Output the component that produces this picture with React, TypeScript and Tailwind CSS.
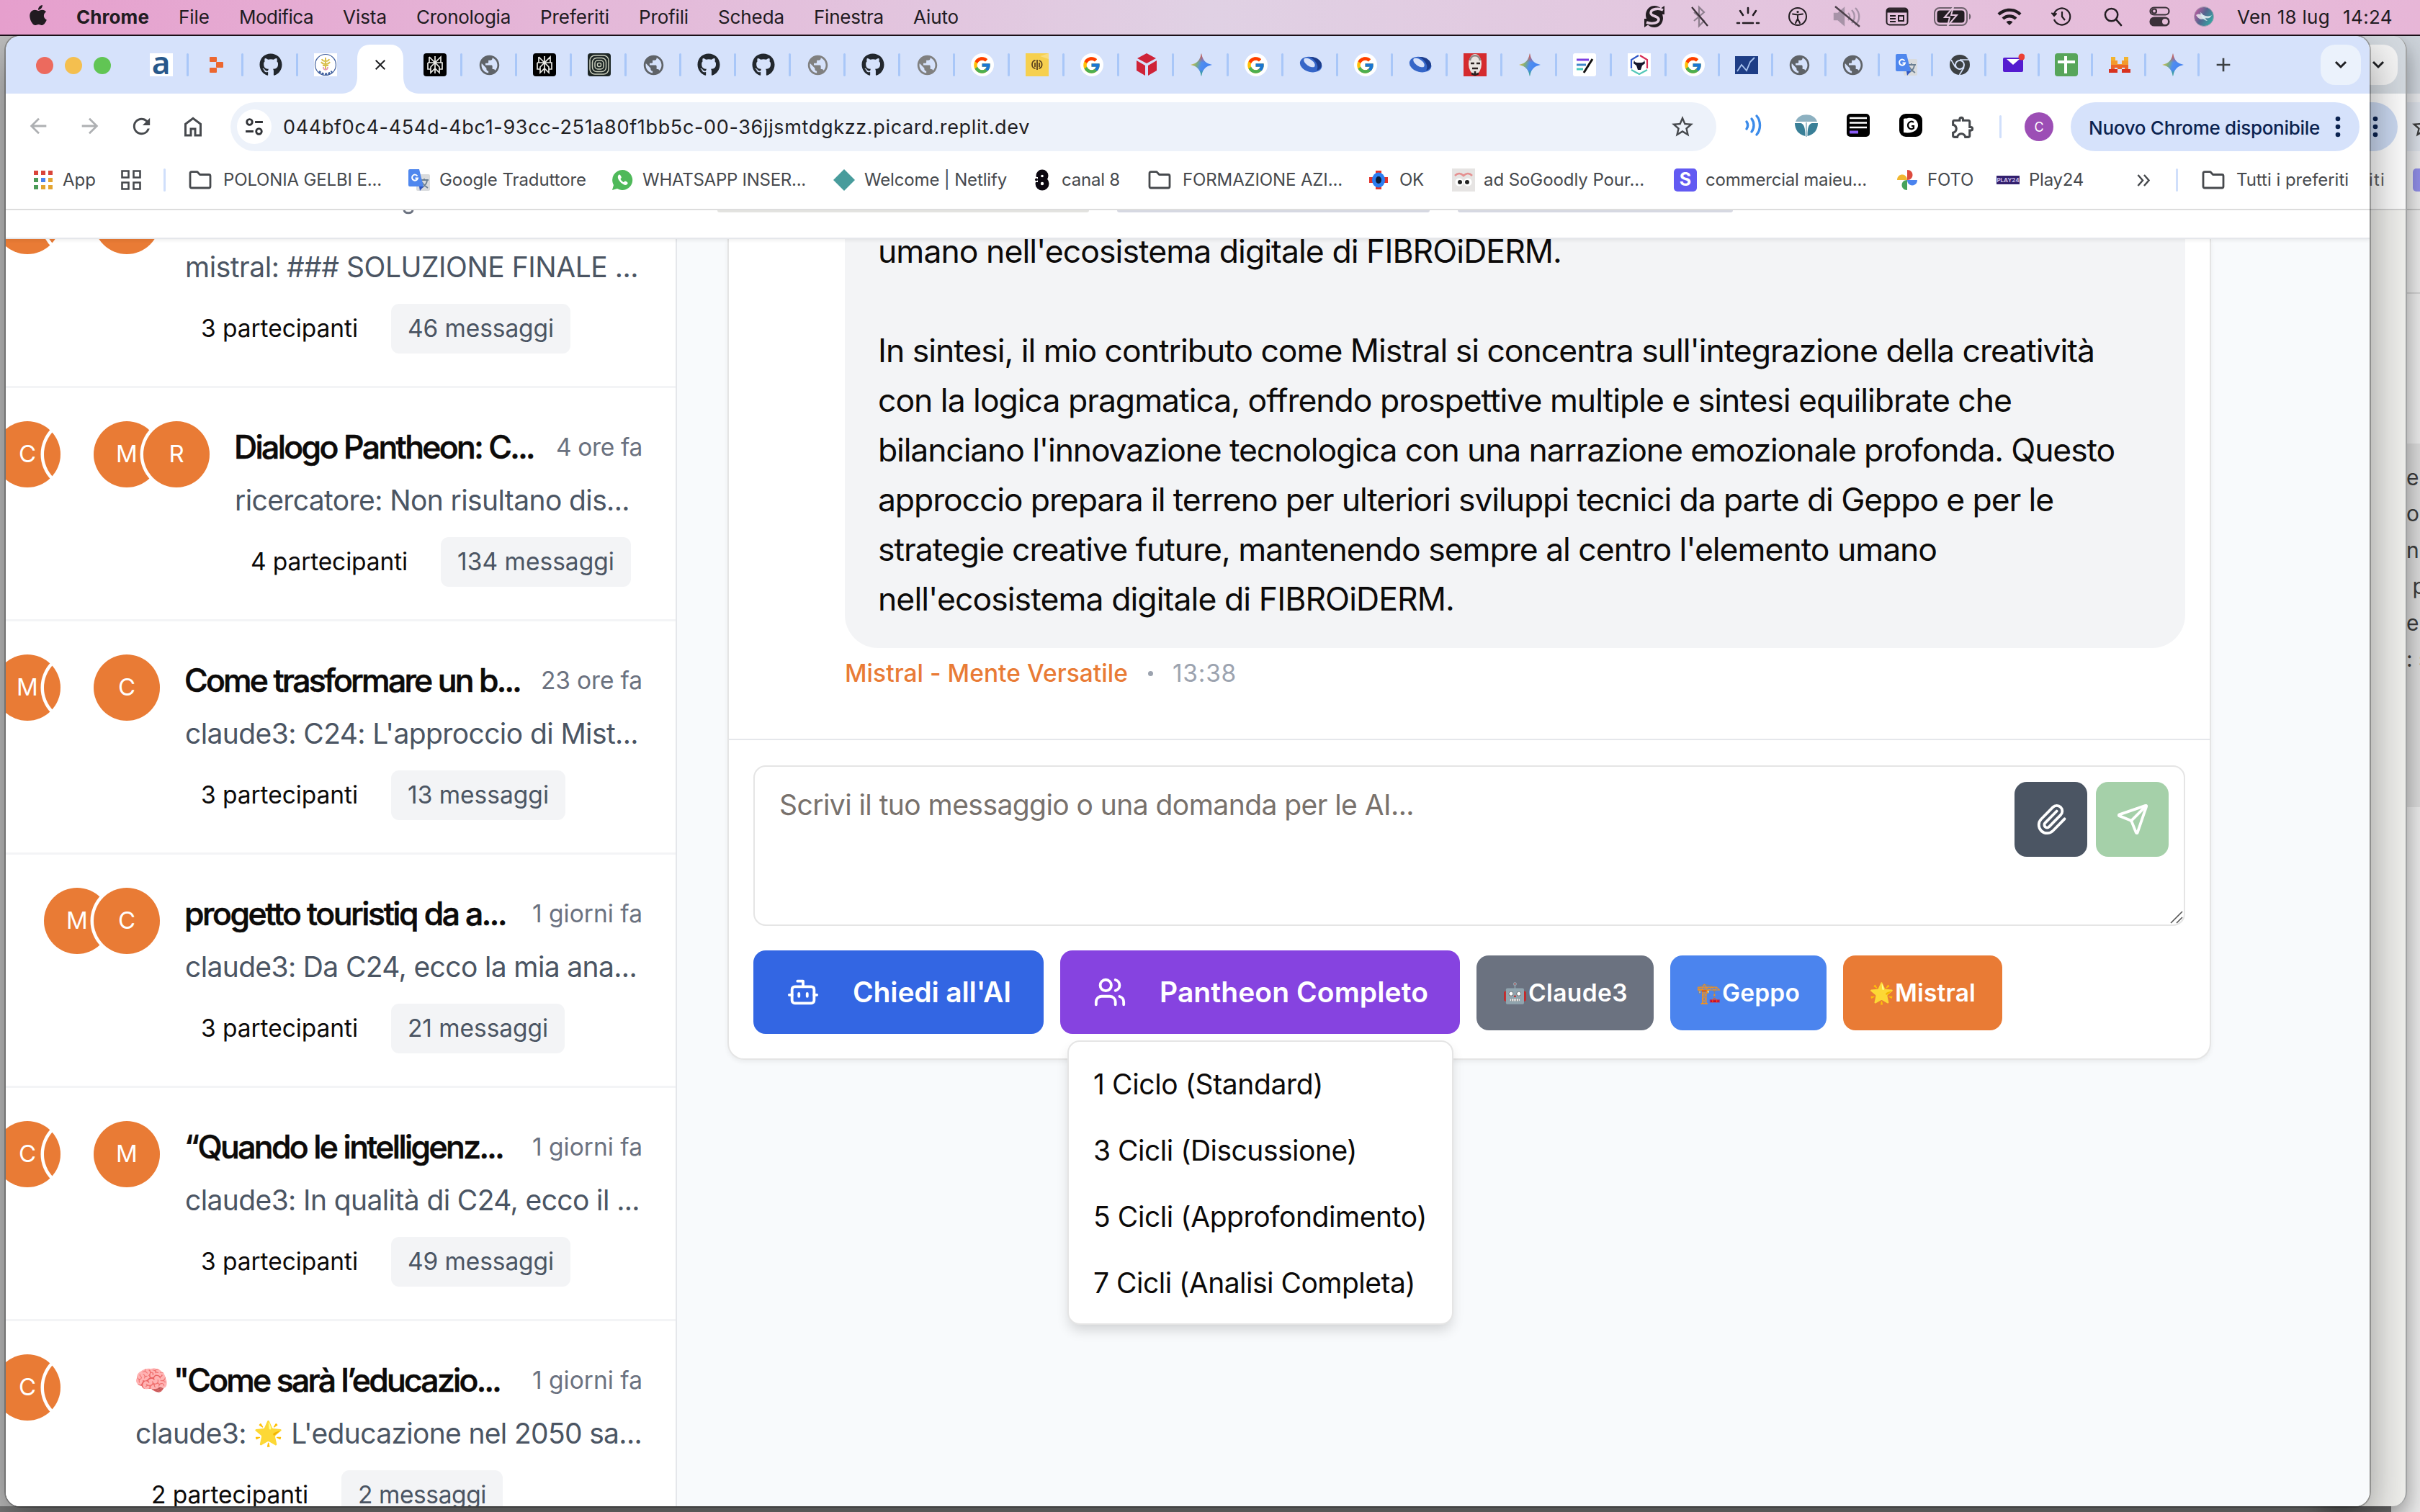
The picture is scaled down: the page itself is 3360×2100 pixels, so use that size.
import React, { useLayoutEffect, useRef, useState } from "react";
import { Bot, Users, Paperclip, Send } from "lucide-react";
import { FaApple, FaGithub, FaWhatsapp } from "react-icons/fa";
import { FcGoogle } from "react-icons/fc";
import { MdArrowBack, MdArrowForward, MdRefresh, MdStarBorder, MdOutlineExtension, MdPublic, MdAdd, MdClose, MdWifi } from "react-icons/md";

/** Single-line text whose tracking is adjusted so that it fills the given width. */
function Fit({ w, className = "", children }: { w: number; className?: string; children: string }) {
  const ref = useRef<HTMLSpanElement>(null);
  const [spacing, setSpacing] = useState(0);
  useLayoutEffect(() => {
    const el = ref.current;
    if (!el) return;
    el.style.letterSpacing = "0px";
    const natural = el.getBoundingClientRect().width;
    const count = Array.from(children).length;
    const next = (w - natural) / Math.max(1, count);
    el.style.letterSpacing = `${next}px`;
    setSpacing(next);
  }, [w, children]);
  return (
    <span ref={ref} className={`inline-block shrink-0 whitespace-pre ${className}`} style={{ letterSpacing: `${spacing}px` }}>
      {children}
    </span>
  );
}

/* ---------- menu bar ---------- */

const menus: [string, number][] = [
  ["File", 43], ["Modifica", 103], ["Vista", 61], ["Cronologia", 131], ["Preferiti", 96],
  ["Profili", 69], ["Scheda", 92], ["Finestra", 97], ["Aiuto", 63],
];

function MenuBar() {
  return (
    <div className="relative z-30 flex h-[50px] shrink-0 items-center border-b-2 border-[#1b1018] bg-linear-to-r from-[#e69fcd] via-[#e0d1e4] to-[#e7b6d7] pb-[2px] text-[26px] text-[#211b21]">
      <FaApple className="ml-[37px] -mt-1 size-[32px]" />
      <Fit w={101} className="ml-[37px] font-bold">Chrome</Fit>
      <div className="ml-[41px] flex gap-[41px]">
        {menus.map(([m, w]) => <Fit key={m} w={w}>{m}</Fit>)}
      </div>
      <div className="ml-auto flex h-full items-center">
        <div className="flex w-[62px] justify-center">
          <svg viewBox="0 0 32 34" className="h-[34px] w-[32px]">
            <path d="M16 2a13 13 0 0 1 9 3.500L30 2v12h-3a14 14 0 0 1 1 5c0 7-5 13-12 13a13 13 0 0 1-9-3.500L2 32V20h3a14 14 0 0 1-1-5C4 8 9 2 16 2z" fill="#231d22" />
            <path d="M28 8c-6-3-17-2-17 4 0 5 11 4 11 9s-9 7-17 4" fill="none" stroke="#e3cbdf" strokeWidth="3.600" />
          </svg>
        </div>
        <div className="relative flex w-[64px] justify-center">
          <svg viewBox="0 0 28 32" className="h-[32px] w-[28px]" fill="none" stroke="#8e7f8e" strokeWidth="2.2">
            <path d="M6 10l14 12-7 7V3l7 7L6 22" />
            <path d="M3 3l22 26" stroke="#3a3038" />
          </svg>
        </div>
        <div className="flex w-[70px] justify-center">
          <svg viewBox="0 0 36 32" className="h-[32px] w-[36px]" fill="none" stroke="#231d22" strokeWidth="2.6" strokeLinecap="round">
            <path d="M18 4v7M7 8l4 6M29 8l-4 6M3 25h3M11 25h14M30 25h3" />
          </svg>
        </div>
        <div className="flex w-[68px] justify-center">
          <svg viewBox="0 0 28 28" className="size-[28px]" fill="none" stroke="#231d22" strokeWidth="2">
            <circle cx="14" cy="14" r="12" />
            <path d="M7 10.5l7 1 7-1M14 12v5l-3 6M14 17l3 6" strokeLinecap="round" />
            <circle cx="14" cy="7.5" r="1.6" fill="#231d22" stroke="none" />
          </svg>
        </div>
        <div className="flex w-[70px] justify-center">
          <svg viewBox="0 0 40 32" className="h-[32px] w-[40px]" fill="none" stroke="#a793a8" strokeWidth="2.4">
            <path d="M2 12h5l8-7v22l-8-7H2z" fill="#a793a8" />
            <path d="M21 11c3 3 3 7 0 10M26 7c5 5 5 13 0 18M31 4c7 7 7 17 0 24" />
            <path d="M3 2l34 28" stroke="#4b404a" />
          </svg>
        </div>
        <div className="flex w-[68px] justify-center">
          <svg viewBox="0 0 32 26" className="h-[26px] w-[32px]" fill="none" stroke="#231d22" strokeWidth="2">
            <rect x="1.5" y="1.5" width="29" height="23" rx="4" />
            <path d="M2 5h28" strokeWidth="5" />
            <path d="M6 12h8M6 16h8M6 20h8M18 12h7v7h-7z" />
          </svg>
        </div>
        <div className="flex w-[86px] justify-center">
          <svg viewBox="0 0 54 28" className="h-[28px] w-[54px]" fill="none">
            <rect x="2" y="2" width="45" height="24" rx="7" stroke="#6e616d" strokeWidth="2" />
            <rect x="5.500" y="5.500" width="38" height="17" rx="4" fill="#231d22" />
            <path d="M28 1l-12 14h7l-3 12 13-15h-8z" fill="#231d22" stroke="#e3c6dd" strokeWidth="2" />
            <path d="M50 10v8c3-1 3-7 0-8z" fill="#6e616d" />
          </svg>
        </div>
        <div className="flex w-[72px] justify-center"><MdWifi className="size-[36px]" /></div>
        <div className="flex w-[72px] justify-center">
          <svg viewBox="0 0 30 28" className="h-[28px] w-[30px]" fill="none" stroke="#231d22" strokeWidth="2.2">
            <path d="M5 10a11.500 11.500 0 1 1 0 8" />
            <path d="M1 9l4 5 4-4z" fill="#231d22" strokeWidth="1" />
            <path d="M16 7v7l4 5" />
          </svg>
        </div>
        <div className="flex w-[70px] justify-center">
          <svg viewBox="0 0 28 28" className="size-[27px]" fill="none" stroke="#231d22" strokeWidth="2.6" strokeLinecap="round">
            <circle cx="12" cy="11" r="9" /><path d="M19 18l7 8" />
          </svg>
        </div>
        <div className="flex w-[62px] justify-center">
          <svg viewBox="0 0 30 28" className="h-[28px] w-[30px]" fill="none" stroke="#3a3038" strokeWidth="2.2">
            <rect x="1.500" y="1.500" width="26" height="10" rx="5" /><circle cx="7" cy="6.500" r="3" />
            <rect x="1.500" y="15.500" width="26" height="11" rx="5.500" fill="#3a3038" /><circle cx="22" cy="21" r="4" fill="#e6bdd9" stroke="none" />
          </svg>
        </div>
        <div className="flex w-[60px] justify-center">
          <svg viewBox="0 0 28 28" className="size-[28px]">
            <defs>
              <linearGradient id="siri" x1="0" y1="0.2" x2="1" y2="0.8">
                <stop offset="0" stopColor="#c75aa0" /><stop offset="0.45" stopColor="#54658f" /><stop offset="1" stopColor="#2fb0a6" />
              </linearGradient>
            </defs>
            <circle cx="14" cy="14" r="13.500" fill="url(#siri)" stroke="#a9a0b4" strokeWidth="1" />
            <path d="M3 12c7-5 13 5 22 0-4 7-7 3-11 5s-8 0-11-5z" fill="#fff" fillOpacity="0.75" />
            <path d="M9 8c4 2 6 8 10 12-5 0-9-5-10-12z" fill="#d9f2f4" fillOpacity="0.8" />
          </svg>
        </div>
        <Fit w={129} className="ml-[16px]">Ven 18 lug</Fit>
        <Fit w={69} className="ml-[18px] mr-[38px]">14:24</Fit>
      </div>
    </div>
  );
}

/* ---------- favicons ---------- */

const Globe = ({ light = false }: { light?: boolean }) => (
  <MdPublic className={`size-[33px] ${light ? "text-[#808080]" : "text-[#5f6368]"}`} />
);
const Github = () => <FaGithub className="size-[32px] text-[#22272d]" />;
const Google = () => (
  <div className="flex size-[32px] items-center justify-center rounded-full bg-white"><FcGoogle className="size-[27px]" /></div>
);
const Gemini = () => (
  <svg viewBox="0 0 32 32" className="size-[32px]">
    <defs>
      <linearGradient id="gem" x1="0" y1="0.3" x2="1" y2="0.6">
        <stop offset="0" stopColor="#f5c33b" /><stop offset="0.3" stopColor="#7fae7c" /><stop offset="0.5" stopColor="#4f8df0" /><stop offset="1" stopColor="#3f7ff2" />
      </linearGradient>
      <linearGradient id="gemTop" x1="0" y1="0" x2="0" y2="1">
        <stop offset="0" stopColor="#f04438" /><stop offset="0.4" stopColor="#f04438" stopOpacity="0" /><stop offset="0.7" stopColor="#2fae5c" stopOpacity="0" /><stop offset="1" stopColor="#2fae5c" />
      </linearGradient>
    </defs>
    <path d="M16 0c1.500 9 5.500 14 15 16-9.500 2-13.500 7-15 16-1.500-9-5.500-14-15-16C10.500 14 14.500 9 16 0z" fill="url(#gem)" />
    <path d="M16 0c1.500 9 5.500 14 15 16-9.500 2-13.500 7-15 16-1.500-9-5.500-14-15-16C10.500 14 14.500 9 16 0z" fill="url(#gemTop)" />
  </svg>
);
const Perplexity = () => (
  <svg viewBox="0 0 32 32" className="size-[32px]" fill="none" stroke="#e9e9e4" strokeWidth="1.7">
    <rect width="32" height="32" rx="4" fill="#000" stroke="none" />
    <path d="M16 4v24M8 5l8 8 8-8v8M8 5v8M6 13h20v9h-4M6 13v9h4M16 13l-6 6v8l6-6 6 6v-8z" />
  </svg>
);
const Rings = () => (
  <svg viewBox="0 0 32 32" className="size-[32px]" fill="none" stroke="#c9cdbb" strokeWidth="1.5">
    <rect width="32" height="32" rx="4" fill="#1d2625" stroke="none" />
    <rect x="3" y="3" width="26" height="26" rx="7" /><rect x="6.500" y="6.500" width="19" height="19" rx="6" />
    <rect x="10" y="10" width="12" height="12" rx="4" /><rect x="13.500" y="13.500" width="5" height="5" rx="2" />
  </svg>
);
const Ball = () => (
  <svg viewBox="0 0 32 32" className="size-[32px]">
    <ellipse cx="16" cy="15.500" rx="15.500" ry="10.500" fill="#3566c8" transform="rotate(14 16 16)" />
    <path d="M14 5c9-1 18 5 17 12-1 4-4 6-7 7 4-6-1-15-10-19z" fill="#1c3d8c" />
    <ellipse cx="14" cy="13" rx="9" ry="4.500" fill="#d7e2fa" transform="rotate(35 14 13)" />
  </svg>
);
const Translate = () => (
  <svg viewBox="0 0 32 32" className="size-[32px]">
    <rect x="12" y="8" width="19" height="23" rx="2" fill="#d9dbdd" />
    <path d="M17 16h12M23 14v2M27 17c-1 5-4 8-8 10M20 19c2 4 5 6 8 8" stroke="#6b7f92" strokeWidth="1.800" fill="none" />
    <path d="M16 25h6l-5 6z" fill="#2f55c0" />
    <path d="M3 1h13l6 24H3a2 2 0 0 1-2-2V3a2 2 0 0 1 2-2z" fill="#4f87ee" />
    <path d="M13.500 10.500a4 4 0 1 0 .5 3h-3.500" stroke="#fff" strokeWidth="2" fill="none" />
  </svg>
);

const tabs: React.ReactNode[] = [
  <div className="flex size-[32px] items-center justify-center bg-white"><span className="-mt-[8px] font-['Noto_Sans'] text-[44px] leading-[32px] font-semibold text-[#28588a]">a</span></div>,
  <svg viewBox="0 0 32 32" className="size-[32px]" fill="#ec6730"><rect x="7" y="5" width="10" height="7" rx="1" /><rect x="16" y="12" width="10" height="8" rx="1" /><rect x="7" y="20" width="10" height="7" rx="1" /></svg>,
  <Github />,
  <svg viewBox="0 0 32 32" className="size-[32px]" fill="none"><rect width="32" height="32" fill="#fff" /><circle cx="16" cy="16" r="14.500" stroke="#3f5f9e" strokeWidth="1.200" /><path d="M11 8c1 4 9 4 10 0M10 12c2 4 10 4 12 0M12 17h8M16 6v16" stroke="#d9c04d" strokeWidth="2" /><path d="M13 19c0 5 6 5 6 0" stroke="#e59bb5" strokeWidth="1.800" /><path d="M7 25c5 5 13 5 18 0" stroke="#3f5f9e" strokeWidth="2.600" strokeDasharray="3 1.500" /></svg>,
  null,
  <Perplexity />, <Globe />, <Perplexity />, <Rings />, <Globe />, <Github />, <Github />, <Globe light />, <Github />, <Globe light />,
  <Google />,
  <svg viewBox="0 0 32 32" className="size-[32px]" fill="none"><rect width="32" height="32" fill="#f6d04f" /><path d="M32 0v8L20 4z" fill="#f9dd7e" /><path d="M16 9v14M13.500 10c-6 0-6 11 0 11M18.500 10c6 2 5 10 0 11M13 13v6M19 13v6" stroke="#5c4320" strokeWidth="1.800" /></svg>,
  <Google />,
  <svg viewBox="0 0 32 32" className="size-[32px]"><path d="M16 0l13 7-13 7L3 7zM2 10l12 7v14L2 24zM30 10l-12 7v14l12-7z" fill="#cf2338" /></svg>,
  <Gemini />, <Google />, <Ball />, <Google />, <Ball />,
  <svg viewBox="0 0 32 32" className="size-[32px]"><rect width="32" height="32" fill="#d52b2e" /><ellipse cx="16" cy="15" rx="9" ry="14" fill="#e9e4e0" /><path d="M9 10c1-9 13-9 14 0" stroke="#8d8583" strokeWidth="2.500" fill="none" /><path d="M10 14h5M18 14h5M12 21h8M16 25v6M11 28l5 2 5-2" stroke="#2a2020" strokeWidth="2.600" fill="none" /></svg>,
  <Gemini />,
  <svg viewBox="0 0 32 32" className="size-[32px]" strokeWidth="3"><rect width="32" height="32" rx="3" fill="#fff" /><path d="M5 9h17" stroke="#7c3fe0" /><path d="M5 16h13" stroke="#3f87c9" /><path d="M5 22h9" stroke="#46c9bc" /><path d="M27 8L15 27" stroke="#111" /></svg>,
  <svg viewBox="0 0 32 32" className="size-[32px]" fill="none" strokeWidth="2.200"><rect width="32" height="32" fill="#fff" /><path d="M15 3L5 9v12" stroke="#2f57c8" /><path d="M17 3l10 6v12" stroke="#d62d55" /><path d="M5 23l11 6 11-6" stroke="#52c7b8" /><path d="M9 9c0 4 3 4 7 4s7 0 7-4l1 5-4 3-2 6h-4l-2-6-4-3z" fill="#15172c" /></svg>,
  <Google />,
  <svg viewBox="0 0 32 32" className="size-[32px]" fill="none"><rect y="4" width="32" height="25" fill="#1e3d85" /><path d="M3 25l6-9 7 8 5-12 6-6" stroke="#a9c3ee" strokeWidth="1.800" /></svg>,
  <Globe />, <Globe />, <Translate />,
  <svg viewBox="0 0 32 32" className="size-[32px]" fill="none"><circle cx="16" cy="16" r="14" fill="#3c4043" /><circle cx="16" cy="16" r="7" fill="#d6e2fb" /><circle cx="16" cy="16" r="5" fill="#3c4043" /><path d="M16 9h13M10 19.500L4 9M22 19.500L15.500 30" stroke="#d6e2fb" strokeWidth="1.600" /></svg>,
  <svg viewBox="0 0 32 32" className="size-[32px]"><rect x="2" y="6" width="28" height="20" rx="2" fill="#551bd0" /><path d="M7 8l9 8 9-8z" fill="#fff" /><circle cx="28" cy="5" r="4.500" fill="#ec4034" /></svg>,
  <svg viewBox="0 0 32 32" className="size-[32px]"><rect width="32" height="32" rx="4" fill="#57a55a" /><path d="M4 12h24M15 4v24" stroke="#fff" strokeWidth="4" /></svg>,
  <svg viewBox="0 0 32 32" className="size-[32px]"><path d="M4 5h6v5H4zM22 5h6v5h-6z" fill="#f2b32e" /><path d="M4 10h9v5h6v-5h9v6H4z" fill="#f39a2c" /><path d="M4 16h24v6h-5v-2h-4v2h-6v-2h-4v2H4z" fill="#ec6428" /><path d="M1 22h12v5H1zM19 22h12v5H19z" fill="#d8321f" /></svg>,
  <Gemini />,
];

function TabStrip() {
  return (
    <div className="flex h-[80px] shrink-0 items-center bg-[#d6e2fb]">
      <div className="ml-[42px] mt-[2px] flex gap-[16px]">
        <div className="size-[24px] rounded-full bg-[#ec6a5e]" />
        <div className="size-[24px] rounded-full bg-[#f4bf4f]" />
        <div className="size-[24px] rounded-full bg-[#61c554]" />
      </div>
      <div className="ml-[32px] flex h-full">
        {tabs.map((icon, i) =>
          i === 4 ? (
            <div key={i} className="relative z-10 flex w-[76px] justify-center">
              <svg viewBox="0 0 112 68" className="absolute -left-[18px] bottom-0 h-[68px] w-[112px]" fill="#fff">
                <path d="M0 68c16 0 24-8 24-24V20C24 8 30 0 42 0h28c12 0 18 8 18 20v24c0 16 8 24 24 24z" />
              </svg>
              <MdClose className="relative mt-[28px] size-[24px] text-[#1f2023]" />
            </div>
          ) : (
            <div key={i} className={`flex h-full items-center ${i > 27 ? "w-[74px]" : "w-[76px]"}`}>
              <div className="flex flex-1 justify-center pl-[2px]">{icon}</div>
              <div className={`h-[32px] w-[3px] rounded-full ${i === 3 ? "bg-transparent" : "bg-[#a9c7f8]"}`} />
            </div>
          )
        )}
        <div className="flex w-[66px] items-center justify-center"><MdAdd className="size-[32px] text-[#3c4043]" /></div>
      </div>
      <div className="mr-[12px] ml-auto flex h-[56px] w-[56px] items-center justify-center rounded-[20px] bg-[#ebf2fc]">
        <svg viewBox="0 0 18 12" className="h-[12px] w-[18px]" fill="none" stroke="#1f2023" strokeWidth="3"><path d="M2 2l7 7 7-7" /></svg>
      </div>
    </div>
  );
}

function Toolbar() {
  return (
    <div className="flex h-[92px] shrink-0 items-center bg-white text-[#46494d]">
      <div className="ml-[9px] flex">
        <div className="flex w-[72px] justify-center"><MdArrowBack className="size-[34px] text-[#aeb0b3]" /></div>
        <div className="flex w-[71px] justify-center"><MdArrowForward className="size-[34px] text-[#aeb0b3]" /></div>
        <div className="flex w-[72px] justify-center"><MdRefresh className="size-[35px]" /></div>
        <div className="flex w-[72px] justify-center">
          <svg viewBox="0 0 24 24" className="size-[36px]" fill="currentColor"><path d="M6 19h3v-6h6v6h3v-9l-6-4.500L6 10Zm-2 2V9l8-6 8 6v12h-7v-6h-2v6Z" /></svg>
        </div>
      </div>
      <div className="ml-[16px] flex h-[68px] w-[2063px] items-center rounded-full bg-[#edf2fa]">
        <div className="ml-[9px] flex size-[48px] items-center justify-center rounded-full bg-white">
          <svg viewBox="0 0 24 24" className="size-[26px]" fill="none" stroke="#303236" strokeWidth="2.600"><circle cx="6" cy="6" r="3.500" /><path d="M13 6h10M1 18h10" /><circle cx="18" cy="18" r="3.500" /></svg>
        </div>
        <Fit w={1037} className="mt-[2px] ml-[16px] text-[27px] text-[#1f2023]">044bf0c4-454d-4bc1-93cc-251a80f1bb5c-00-36jjsmtdgkzz.picard.replit.dev</Fit>
        <MdStarBorder className="mr-[29px] ml-auto size-[36px]" />
      </div>
      <div className="ml-[16px] flex">
        <div className="flex w-[72px] justify-center">
          <svg viewBox="0 0 32 32" className="size-[32px]" fill="none" stroke="#3b8bea" strokeWidth="3.400" strokeLinecap="round"><path d="M6 11c2 3 2 7 0 10M13 7c4 5 4 13 0 18M20 3c6 7 6 19 0 26" /></svg>
        </div>
        <div className="flex w-[73px] justify-center">
          <svg viewBox="0 0 32 32" className="size-[32px]"><path d="M1 11C5-2 27-2 31 11z" fill="#8db1c1" /><path d="M0 13h8c5 1 6.500 7 6.500 18C5 29 0 22 0 13zM32 13h-8c-5 1-6.500 7-6.500 18C27 29 32 22 32 13z" fill="#397f97" /><path d="M15.200 12h1.600v20h-1.600z" fill="#8db1c1" /></svg>
        </div>
        <div className="flex w-[72px] justify-center">
          <svg viewBox="0 0 32 32" className="size-[32px]" strokeWidth="2.600"><rect width="32" height="32" rx="5" fill="#000" /><path d="M4 6h24M4 12.500h24M4 19h24" stroke="#fff" /><path d="M4 25.500h12" stroke="#8a5cf6" strokeWidth="4" /></svg>
        </div>
        <div className="flex w-[73px] justify-center">
          <svg viewBox="0 0 32 32" className="size-[32px]" fill="none"><rect width="32" height="32" rx="9" fill="#000" /><path d="M6 7c3-1 4 0 6-1 9-1 14 4 14 10S20 28 6 26z" fill="#fff" /><path d="M20 12c-3-3-8 0-8 4s4 7 8 4v-3h-3" stroke="#000" strokeWidth="2.200" /></svg>
        </div>
        <div className="flex w-[72px] justify-center"><MdOutlineExtension className="size-[37px]" /></div>
      </div>
      <div className="ml-[15px] h-[32px] w-[3px] rounded-full bg-[#d0dffb]" />
      <div className="ml-[32px] flex size-[40px] items-center justify-center rounded-full bg-[#9c4eb5] text-[18px] text-white">C</div>
      <div className="ml-[24px] flex h-[68px] w-[401px] items-center rounded-full bg-[#d6e2fb] pl-[25px] text-[#0b2350]">
        <Fit w={321} className="mt-[2px] text-[26px] font-medium">Nuovo Chrome disponibile</Fit>
        <svg viewBox="0 0 8 30" className="ml-[21px] h-[30px] w-[8px]" fill="currentColor"><circle cx="4" cy="4" r="3.300" /><circle cx="4" cy="15" r="3.300" /><circle cx="4" cy="26" r="3.300" /></svg>
      </div>
    </div>
  );
}

const Folder = () => (
  <svg viewBox="0 0 32 26" className="h-[26px] w-[32px]" fill="none" stroke="#46494d" strokeWidth="2.800" strokeLinejoin="round"><path d="M2 4c0-1.500.8-2.300 2-2.300h8L15.500 5.500H28c1.300 0 2 .8 2 2V22c0 1.300-.8 2-2 2H4c-1.300 0-2-.8-2-2z" /></svg>
);

const bookmarks: { icon: React.ReactNode; text: string; w: number; cell: string; gap: string }[] = [
  { icon: <Folder />, text: "POLONIA GELBI E...", w: 220, cell: "w-[304px]", gap: "ml-[16px]" },
  { icon: <Translate />, text: "Google Traduttore", w: 204, cell: "w-[282px]", gap: "ml-[12px]" },
  { icon: <svg viewBox="0 0 32 32" className="size-[32px]"><path d="M16 2a14 14 0 1 1-7 26l-7 2 2-7A14 14 0 0 1 16 2z" fill="#4fb95a" /><path d="M11.500 8.500c-4 3 0 9 3 11.500s7 4.500 9 1c.8-1.800-3-4-4.200-3.300l-1.300 1.500c-2-.7-4-3-4.600-4.600l1.300-1.500c.7-1-1.500-5.300-3.200-4.600z" fill="#fff" /></svg>, text: "WHATSAPP INSER...", w: 227, cell: "w-[308px]", gap: "ml-[12px]" },
  { icon: <svg viewBox="0 0 32 32" className="size-[32px]"><path d="M16 1l15 15-15 15L1 16z" fill="#489c9c" /></svg>, text: "Welcome | Netlify", w: 198, cell: "w-[274px]", gap: "ml-[12px]" },
  { icon: <svg viewBox="0 0 32 32" className="size-[32px]"><circle cx="17" cy="10" r="8.500" fill="#0b0710" /><circle cx="17" cy="21" r="9.500" fill="#0b0710" /><circle cx="17" cy="10.500" r="1.800" fill="#fff" /><circle cx="17" cy="21" r="2.200" fill="#fff" /><path d="M5 12h6v7H5z" fill="#fff" /><circle cx="9" cy="15.500" r="2" fill="#0b0710" /></svg>, text: "canal 8", w: 81, cell: "w-[164px]", gap: "ml-[12px]" },
  { icon: <Folder />, text: "FORMAZIONE AZI...", w: 222, cell: "w-[304px]", gap: "ml-[16px]" },
  { icon: <svg viewBox="0 0 32 32" className="size-[32px]"><path d="M12 3h8v26h-8zM3 12h26v8H3z" fill="#e3342b" /><ellipse cx="16" cy="16" rx="9" ry="10.500" fill="#2b7df0" /><ellipse cx="16" cy="16" rx="4" ry="5" fill="#0b1c38" /></svg>, text: "OK", w: 34, cell: "w-[118px]", gap: "ml-[13px]" },
  { icon: <svg viewBox="0 0 32 32" className="size-[32px]"><rect width="32" height="32" fill="#e6e4e3" /><path d="M4 10c4-4 8-4 12 0 4-4 8-4 12 0" stroke="#e58f8f" strokeWidth="2.500" fill="none" /><circle cx="10" cy="19" r="5.500" fill="#fff" /><circle cx="22" cy="19" r="5.500" fill="#fff" /><circle cx="11" cy="19" r="3" fill="#222" /><circle cx="21" cy="19" r="3" fill="#222" /></svg>, text: "ad SoGoodly Pour...", w: 223, cell: "w-[308px]", gap: "ml-[12px]" },
  { icon: <div className="flex size-[32px] items-center justify-center rounded-[5px] bg-[#625af2] text-[25px] font-bold text-white">S</div>, text: "commercial maieu...", w: 224, cell: "w-[308px]", gap: "ml-[12px]" },
  { icon: <svg viewBox="0 0 32 32" className="size-[32px]"><path d="M16 16V2c10 0 10 14 0 14z" fill="#dd4b3e" /><path d="M16 16h14c0 10-14 10-14 0z" fill="#4a83ee" /><path d="M16 16v14c-10 0-10-14 0-14z" fill="#46a35c" /><path d="M16 16H2c0-10 14-10 14 0z" fill="#f1b731" /></svg>, text: "FOTO", w: 64, cell: "w-[140px]", gap: "ml-[12px]" },
  { icon: <div className="flex h-[12px] w-[32px] items-center justify-center bg-[#33206e] text-[8px] leading-none font-bold text-[#c9bde8]">PLAY24</div>, text: "Play24", w: 76, cell: "w-[188px]", gap: "ml-[13px]" },
];

const appDots = ["#d9453a", "#d9453a", "#d9453a", "#4a9a57", "#4a83ee", "#e3a531", "#4a9a57", "#e3a531", "#e3a531"];

function Bookmarks() {
  return (
    <div className="flex h-[70px] shrink-0 border-b-2 border-[#dfdfdf] bg-white pb-[12px] text-[24px] text-[#46494d]">
      <div className="flex items-center">
        <svg viewBox="0 0 26 26" className="ml-[39px] size-[26px]">
          {appDots.map((c, i) => <rect key={i} x={(i % 3) * 10} y={Math.floor(i / 3) * 10} width="6" height="6" fill={c} />)}
        </svg>
        <Fit w={46} className="ml-[14px]">App</Fit>
        <svg viewBox="0 0 28 28" className="ml-[35px] size-[28px]" fill="none" stroke="#46494d" strokeWidth="2.600"><path d="M1.500 1.500h9v9h-9zM17.500 1.500h9v9h-9zM1.500 17.500h9v9h-9zM17.500 17.500h9v9h-9z" /></svg>
        <div className="ml-[31px] h-[32px] w-[3px] rounded-full bg-[#d0dffb]" />
        <div className="ml-[32px] flex">
          {bookmarks.map((b) => (
            <div key={b.text} className={`flex items-center ${b.cell}`}>
              <div className="flex w-[32px] shrink-0 justify-center">{b.icon}</div>
              <Fit w={b.w} className={b.gap}>{b.text}</Fit>
            </div>
          ))}
        </div>
        <svg viewBox="0 0 20 18" className="ml-[6px] h-[17px] w-[20px]" fill="none" stroke="#46494d" strokeWidth="2.600"><path d="M2 1l7 8-7 8M11 1l7 8-7 8" /></svg>
        <div className="ml-[35px] h-[32px] w-[3px] rounded-full bg-[#d0dffb]" />
        <div className="ml-[33px]"><Folder /></div>
        <Fit w={156} className="ml-[16px]">Tutti i preferiti</Fit>
      </div>
    </div>
  );
}

/* ---------- conversation list ---------- */

type Conversation = {
  avatars: string[];
  emoji?: string;
  title: [string, number];
  time: [string, number];
  preview: React.ReactNode;
  people: string;
  messages: [string, number];
};

const text40 = "text-[39px] leading-[57px]";
const conversations: Conversation[] = [
  { avatars: ["C", "", "M"], title: ["", 0], time: ["", 0], preview: <Fit w={629} className={text40}>mistral: ### SOLUZIONE FINALE ...</Fit>, people: "3 partecipanti", messages: ["46 messaggi", 203] },
  { avatars: ["C", "", "M", "R"], title: ["Dialogo Pantheon: C...", 416], time: ["4 ore fa", 120], preview: <Fit w={548} className={text40}>ricercatore: Non risultano dis...</Fit>, people: "4 partecipanti", messages: ["134 messaggi", 218] },
  { avatars: ["M", "", "C"], title: ["Come trasformare un b...", 466], time: ["23 ore fa", 141], preview: <Fit w={629} className={text40}>claude3: C24: L'approccio di Mist...</Fit>, people: "3 partecipanti", messages: ["13 messaggi", 196] },
  { avatars: ["-", "M", "C"], title: ["progetto touristiq da a...", 446], time: ["1 giorni fa", 153], preview: <Fit w={627} className={text40}>claude3: Da C24, ecco la mia ana...</Fit>, people: "3 partecipanti", messages: ["21 messaggi", 195] },
  { avatars: ["C", "", "M"], title: ["“Quando le intelligenz...", 442], time: ["1 giorni fa", 153], preview: <Fit w={631} className={text40}>claude3: In qualità di C24, ecco il ...</Fit>, people: "3 partecipanti", messages: ["49 messaggi", 203] },
  {
    avatars: ["C", ""], emoji: "🧠", title: ["\"Come sarà l’educazio...", 453], time: ["1 giorni fa", 153],
    preview: (
      <div className={`flex ${text40}`}>
        <Fit w={154}>claude3:</Fit>
        <span className="ml-[8px] flex w-[44px] justify-center text-[33px]">🌟</span>
        <Fit w={497}>{" L'educazione nel 2050 sa..."}</Fit>
      </div>
    ),
    people: "2 partecipanti", messages: ["2 messaggi", 178],
  },
];

function Avatar({ letter }: { letter: string }) {
  if (letter === "-") return <div className="-mr-[23px] size-[92px] shrink-0" />;
  return (
    <div className={`-mr-[23px] flex size-[92px] shrink-0 items-center justify-center rounded-full text-[33px] text-white ring-[4.5px] ring-white ${letter ? "bg-[#e97b35]" : ""}`}>
      {letter}
    </div>
  );
}

function Sidebar() {
  return (
    <div className="w-[932px] shrink-0 overflow-hidden border-r-2 border-[#e5e7eb] bg-white">
      <div className="-mt-[117px]">
        {conversations.map((c, i) => (
          <div key={i} className="flex h-[324px] border-b-[3px] border-[#f3f4f6] pt-[46px] pr-[46px]">
            <div className="-ml-[16px] flex pr-[23px]">{c.avatars.map((a, j) => <Avatar key={j} letter={a} />)}</div>
            <div className="ml-[35px] min-w-0 flex-1">
              <div className="flex h-[69px] items-center pt-[3px] text-[44.5px] font-medium text-[#0c0a09]">
                {c.emoji && <span className="-ml-[2px] mr-[5px] w-[51px] text-[39px]">{c.emoji}</span>}
                {c.title[0] && <Fit w={c.title[1]} className="-ml-px [-webkit-text-stroke:0.6px_#0c0a09]">{c.title[0]}</Fit>}
                {c.time[0] && <Fit w={c.time[1]} className="ml-auto text-[33.5px] font-normal text-[#6b7280]">{c.time[0]}</Fit>}
              </div>
              <div className="mt-[12px] h-[58px] text-[#4b5563]">{c.preview}</div>
              <div className="mt-[22px] flex h-[69px] items-center gap-[46px] text-[33.5px]">
                <Fit w={218} className="ml-[22px] text-[#0c0a09]">{c.people}</Fit>
                <div className="flex h-full items-center rounded-[11px] bg-[#f3f4f6] px-[23px] text-[#4b5563]">
                  <Fit w={c.messages[1]}>{c.messages[0]}</Fit>
                </div>
              </div>
            </div>
          </div>
        ))}
      </div>
    </div>
  );
}

/* ---------- chat ---------- */

const lines: [string, number][] = [
  ["umano nell'ecosistema digitale di FIBROiDERM.", 949],
  ["", 0],
  ["In sintesi, il mio contributo come Mistral si concentra sull'integrazione della creatività", 1689],
  ["con la logica pragmatica, offrendo prospettive multiple e sintesi equilibrate che", 1574],
  ["bilanciano l'innovazione tecnologica con una narrazione emozionale profonda. Questo", 1717],
  ["approccio prepara il terreno per ulteriori sviluppi tecnici da parte di Geppo e per le", 1632],
  ["strategie creative future, mantenendo sempre al centro l'elemento umano", 1470],
  ["nell'ecosistema digitale di FIBROiDERM.", 800],
];

const cycles: [string, number][] = [
  ["1 Ciclo (Standard)", 319], ["3 Cicli (Discussione)", 366], ["5 Cicli (Approfondimento)", 463], ["7 Cicli (Analisi Completa)", 447],
];

function CycleMenu() {
  return (
    <div className="absolute top-[125px] left-[10px] z-20 h-[395px] w-[536px] rounded-[17px] border-2 border-[#e5e5e5] bg-white pt-[13px] shadow-[0_10px_18px_-3px_rgba(0,0,0,0.16)]">
      {cycles.map(([t, w]) => (
        <div key={t} className="flex h-[92px] items-center pl-[34px] text-[39px] font-normal text-[#0c0a09]"><Fit w={w}>{t}</Fit></div>
      ))}
    </div>
  );
}

function Persona({ emoji, name, w, className }: { emoji: string; name: string; w: number; className: string }) {
  return (
    <div className={`mt-[2px] flex h-[104px] items-center rounded-[17px] pl-[37px] text-[33.5px] font-semibold text-white ${className}`}>
      <span className="-ml-[1px] w-[36px] text-[28px]">{emoji}</span>
      <Fit w={w}>{name}</Fit>
    </div>
  );
}

function Chat() {
  return (
    <div className="ml-[70px] flex h-[1140px] w-[2060px] flex-col rounded-b-[23px] border-x-2 border-b-2 border-[#e5e5e5] bg-white shadow-[0_3px_6px_rgba(0,0,0,0.06)]">
      <div className="ml-[161px] flex h-[568px] w-[1861px] shrink-0 flex-col justify-end overflow-hidden rounded-b-[46px] bg-[#f3f4f6] px-[46px] pb-[33px] text-[44.5px] leading-[69px] text-[#0c0a09]">
        {lines.map(([t, w], i) => <div key={i} className="h-[69px] shrink-0">{t && <Fit w={w}>{t}</Fit>}</div>)}
      </div>
      <div className="mt-[12px] ml-[161px] flex h-[46px] items-center text-[33.5px]">
        <Fit w={393} className="font-medium text-[#e97b35]">Mistral - Mente Versatile</Fit>
        <div className="ml-[28px] size-[7px] rounded-full bg-[#9ca3af]" />
        <Fit w={89} className="ml-[27px] text-[#9ca3af]">13:38</Fit>
      </div>
      <div className="mt-auto border-t-2 border-[#e5e7eb] px-[34px] pt-[35px] pb-[34px]">
        <div className="relative flex h-[223px] items-start rounded-[17px] border-2 border-[#e5e5e5] pt-[21px] pr-[21px] pl-[34px]">
          <Fit w={881} className="mt-[3px] text-[39px] leading-[57px] text-[#78716c]">Scrivi il tuo messaggio o una domanda per le AI...</Fit>
          <div className="ml-auto flex gap-[12px]">
            <div className="flex h-[104px] w-[101px] items-center justify-center rounded-[17px] bg-[#4b5563]"><Paperclip className="size-[46px] text-white" /></div>
            <div className="flex h-[104px] w-[101px] items-center justify-center rounded-[17px] bg-[#a5d0a9]"><Send className="size-[46px] text-white" /></div>
          </div>
          <svg viewBox="0 0 18 18" className="absolute right-[1px] bottom-[1px] size-[18px]" stroke="#555" strokeWidth="1.600"><path d="M1 17L17 1M9 17l8-8" /></svg>
        </div>
        <div className="mt-[34px] flex h-[116px] items-center gap-[23px] text-[39px] font-semibold text-white">
          <div className="flex h-full w-[403px] items-center rounded-[17px] bg-[#3366e3] pl-[46px]">
            <Bot className="size-[46px]" />
            <Fit w={220} className="ml-[46px]">Chiedi all'AI</Fit>
          </div>
          <div className="relative flex h-full w-[555px] items-center rounded-[17px] bg-[#8643e0] pl-[46px]">
            <Users className="size-[46px]" />
            <Fit w={373} className="ml-[46px]">Pantheon Completo</Fit>
            <CycleMenu />
          </div>
          <Persona emoji="🤖" name="Claude3" w={138} className="w-[246px] bg-[#6b7280]" />
          <Persona emoji="🏗️" name="Geppo" w={108} className="w-[217px] bg-[#4b84ee]" />
          <Persona emoji="🌟" name="Mistral" w={112} className="w-[221px] bg-[#e97b35]" />
        </div>
      </div>
    </div>
  );
}

function Page() {
  return (
    <div className="flex min-h-0 flex-1 flex-col bg-[#f8fafc]">
      <div className="relative z-10 flex h-[40px] shrink-0 items-start border-b-2 border-[#e5e7eb] bg-white shadow-[0_2px_5px_rgba(0,0,0,0.07)]">
        <svg viewBox="0 0 16 6" className="ml-[551px] h-[6px] w-[16px]" fill="none" stroke="#6b7280" strokeWidth="3"><path d="M2 0c1 5 11 5 12 0" /></svg>
        <div className="ml-[421px] h-[3px] w-[516px] rounded-b-[3px] bg-[#e3e3e0]" />
        <div className="ml-[39px] h-[3px] w-[434px] rounded-b-[3px] bg-[#d6d8e2]" />
        <div className="ml-[39px] h-[3px] w-[382px] rounded-b-[3px] bg-[#d6d8e2]" />
      </div>
      <div className="flex min-h-0 flex-1">
        <Sidebar />
        <Chat />
      </div>
    </div>
  );
}

/* ---------- desktop ---------- */

const sliver = ["e", "or", "n", " p", "er", ": s"];

function BackWindows() {
  return (
    <>
      <div className="absolute inset-y-0 right-0 w-[40px] overflow-hidden bg-[#e9e9e9] text-[30px] text-[#3d3d3d]">
        <div className="h-[80px] bg-[#cdd3da]" />
        <div className="flex h-[92px] items-center bg-[#e6e7ea]"><div className="flex h-[68px] w-full items-center bg-[#d9dee6] pl-[26px]"><MdStarBorder className="size-[36px] shrink-0" /></div></div>
        <div className="h-[70px] border-b-2 border-[#c4c4c4] pt-[12px] pl-[30px]"><div className="h-[32px] w-[32px] rounded-[5px] bg-[#8f8ce4]" /></div>
        <div className="h-[116px] border-b-2 border-[#cfcfcf]" />
        <div className="mt-[208px] h-[505px] bg-[#d9d9d9] pt-[25px] pl-[21px]">
          {sliver.map((s, i) => <div key={i} className="h-[50.4px] whitespace-pre">{s}</div>)}
        </div>
      </div>
      <div className="absolute top-0 right-[18px] bottom-[8px] w-[120px] overflow-hidden rounded-[20px] border-r-2 border-[#a3a5a6] bg-[#efefec] shadow-[0_14px_30px_rgba(0,0,0,0.35)]">
        <div className="flex h-[80px] items-center justify-end bg-[#d3d9df]">
          <div className="mr-[11px] flex size-[56px] items-center justify-end rounded-[20px] bg-[#f4f4f4] pr-[18px]">
            <svg viewBox="0 0 18 12" className="h-[12px] w-[18px]" fill="none" stroke="#1f2023" strokeWidth="3"><path d="M2 2l7 7 7-7" /></svg>
          </div>
        </div>
        <div className="flex h-[92px] items-center justify-end bg-[#fafafa]">
          <div className="mr-[11px] flex h-[68px] w-[100px] items-center justify-end rounded-r-full bg-[#cad8f0] pr-[27px]">
            <svg viewBox="0 0 8 30" className="h-[30px] w-[8px]" fill="#0b2350"><circle cx="4" cy="4" r="3.300" /><circle cx="4" cy="15" r="3.300" /><circle cx="4" cy="26" r="3.300" /></svg>
          </div>
        </div>
        <div className="flex h-[70px] items-center justify-end border-b-2 border-[#cfcfcf] bg-[#fafafa] pr-[28px] pb-[12px] text-[24px] text-[#5a5c60]"><Fit w={23}>iti</Fit></div>
      </div>
    </>
  );
}

export default function App() {
  return (
    <div className="flex h-[2100px] w-[3360px] flex-col overflow-hidden bg-[#7a7a7a] font-['Inter',sans-serif]">
      <MenuBar />
      <div className="relative flex-1 overflow-hidden">
        <div className="absolute inset-x-0 top-0 bottom-[8px] bg-[#bfbfbf]" />
        <BackWindows />
        <div className="absolute top-0 bottom-[8px] left-[8px] flex w-[3282px] flex-col overflow-hidden rounded-[20px] bg-white shadow-[0_24px_60px_rgba(0,0,0,0.4),0_0_0_2px_rgba(0,0,0,0.25)]">
          <TabStrip />
          <Toolbar />
          <Bookmarks />
          <Page />
        </div>
      </div>
    </div>
  );
}
